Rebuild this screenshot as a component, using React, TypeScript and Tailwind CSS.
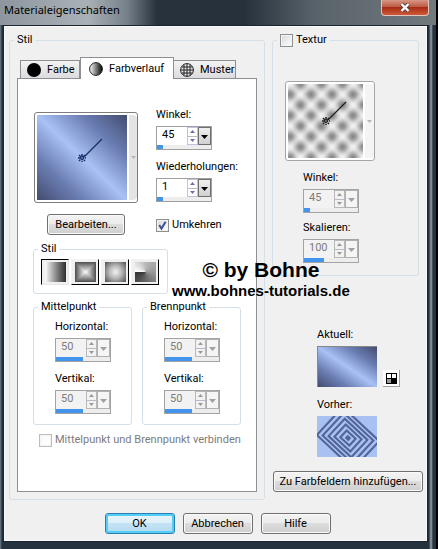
import { useId, useState } from 'react';
import type { ReactNode } from 'react';

interface SpinnerProps {
  label: string;
  initial: string;
  fill: string;
  disabled?: boolean;
}

function Spinner({ label, initial, fill, disabled = false }: SpinnerProps) {
  const id = useId();
  const [value, setValue] = useState(initial);

  const step = (delta: number) => setValue((v) => String(Number(v) + delta));
  const arrow = disabled ? 'text-[#999999]' : 'text-[#6f6cae]';

  return (
    <div className="flex flex-col gap-1">
      <label htmlFor={id} className="h-3.5 whitespace-nowrap">{label}</label>
      <div
        className={`flex h-6 w-14 flex-col border ${disabled ? 'border-[#a3a3a3] bg-[#f2f2f2] text-[#7c7c7c]' : 'border-[#a0a0a0] bg-white text-black'}`}
      >
        <div className="flex h-[18px]">
          <input
            id={id}
            value={value}
            disabled={disabled}
            onChange={(e) => setValue(e.target.value)}
            className="h-4 min-w-0 flex-1 bg-transparent pl-[5px] leading-4 outline-none"
          />
          <div className={`flex w-[11px] flex-col border ${disabled ? 'border-[#b8b8b8]' : 'border-[#c3c1dd]'} ${arrow}`}>
            <button type="button" aria-label="+" disabled={disabled} onClick={() => step(1)} className="flex flex-1 items-center justify-center border-b border-[#b8b8c8]">
              <svg width="5" height="3" viewBox="0 0 5 3"><path d="M2.5 0L5 3H0z" fill="currentColor" /></svg>
            </button>
            <button type="button" aria-label="-" disabled={disabled} onClick={() => step(-1)} className="flex flex-1 items-center justify-center">
              <svg width="5" height="3" viewBox="0 0 5 3"><path d="M0 0h5L2.5 3z" fill="currentColor" /></svg>
            </button>
          </div>
          <button
            type="button"
            aria-label={label}
            disabled={disabled}
            className={`flex w-[13px] items-center justify-center border pt-0.5 ${disabled ? 'border-[#b0b0b0] bg-[#f5f5f5] text-[#a0a0a0]' : 'border-[#707070] bg-linear-to-b from-[#f0f0f0] to-[#d0d0d0] text-black'}`}
          >
            <svg width="7" height="4" viewBox="0 0 7 4"><path d="M0 0h7L3.5 4z" fill="currentColor" /></svg>
          </button>
        </div>
        <div className="h-1 bg-[#ededed]">
          <div className={`h-full bg-[#4394ec] ${fill}`} />
        </div>
      </div>
    </div>
  );
}

interface GroupProps {
  title: ReactNode;
  className?: string;
  children: ReactNode;
}

function Group({ title, className = '', children }: GroupProps) {
  return (
    <fieldset className="min-w-0 rounded-[3px] border border-[#d5dfe5]">
      <legend className="ml-1 flex h-3.5 items-center px-[3px]">{title}</legend>
      <div className={className}>{children}</div>
    </fieldset>
  );
}

interface CheckProps {
  label: string;
  checked?: boolean;
  disabled?: boolean;
}

function Check({ label, checked = false, disabled = false }: CheckProps) {
  const [on, setOn] = useState(checked);
  return (
    <label className={`flex h-3.5 items-center gap-[3px] whitespace-nowrap ${disabled ? 'text-[#7c7c7c]' : ''}`}>
      <span className="relative flex">
        <input
          type="checkbox"
          checked={on}
          disabled={disabled}
          onChange={() => setOn(!on)}
          className="peer size-[13px] appearance-none border border-[#8e8f8f] bg-linear-to-br from-[#d5d9dc] to-white shadow-[inset_0_0_0_1px_#f4f4f4] disabled:border-[#bcbcbc] disabled:from-[#f8f8f8]"
        />
        <svg className="pointer-events-none absolute inset-0 hidden peer-checked:block" width="13" height="13" viewBox="0 0 13 13">
          <path d="M3.2 6l2.3 3.6L9.6 2.8" fill="none" stroke="#3f4f90" strokeWidth="2" />
        </svg>
      </span>
      {label}
    </label>
  );
}

function PushButton({ children, className = '' }: { children: ReactNode; className?: string }) {
  return (
    <button
      type="button"
      className={`h-[21px] rounded-[3px] border whitespace-nowrap ${className || 'border-[#707070] bg-[linear-gradient(#f3f3f3,#ebebeb_50%,#dddddd_50%,#cfcfcf)] shadow-[inset_0_0_0_1px_#fafafa]'}`}
    >
      {children}
    </button>
  );
}

function Handle({ color, className }: { color: string; className: string }) {
  return (
    <svg className={className} viewBox="0 0 32 32" width="32" height="32">
      <path d="M10 22L28 4" stroke={color} strokeWidth="1.2" />
      <path d="M8 19v8M4 23h8M5 20l6 6M11 20l-6 6" stroke={color} strokeWidth="1.5" strokeDasharray="2.4 1" />
      <circle cx="8" cy="23" r="2" fill={color} />
      <circle cx="8" cy="23" r="0.7" fill="#c8d2ea" />
    </svg>
  );
}

function TexturePattern() {
  return (
    <svg className="h-full w-full" aria-hidden="true">
      <defs>
        <radialGradient id="dot">
          <stop offset="0" stopColor="#828282" />
          <stop offset="0.3" stopColor="#8f8f8f" stopOpacity="0.85" />
          <stop offset="0.65" stopColor="#b0b0b0" stopOpacity="0.45" />
          <stop offset="1" stopColor="#e0e0e0" stopOpacity="0" />
        </radialGradient>
        <pattern id="dots" width="21" height="21" patternUnits="userSpaceOnUse" patternTransform="translate(2 0)">
          <rect width="21" height="21" fill="#f0f0f0" />
          {[[0, 10.5], [21, 10.5], [10.5, 0], [10.5, 21]].map(([x, y]) => (
            <circle key={`${x}-${y}`} cx={x} cy={y} r="10" fill="url(#dot)" />
          ))}
        </pattern>
      </defs>
      <rect width="100%" height="100%" fill="url(#dots)" />
    </svg>
  );
}

function PreviousSwatch() {
  return (
    <svg width="60" height="41" viewBox="0 0 60 41" className="block">
      <rect width="60" height="41" fill="#a9c0f2" />
      <g transform="translate(31 22) rotate(43)" fill="none" stroke="#53649a" strokeWidth="2.1">
        {[0.3, 1.3, 2.3, 3.3, 4.3, 5.3].map((n) => (
          <rect key={n} x={-4.7 * n} y={-3.6 * n} width={9.4 * n} height={7.2 * n} />
        ))}
      </g>
    </svg>
  );
}

const tab = 'flex items-center gap-1.5 whitespace-nowrap border border-b-0 border-[#8d8f95] px-1.5';
const blueRamp = 'bg-[linear-gradient(to_top_right,#434c70,#6a7db2_25%,#a9c1f6_50%,#6a7db2_75%,#434c70)]';

const styleButtons = [
  { name: 'Linear', fill: 'bg-linear-to-r from-white to-[#303030]' },
  { name: 'Rechteckig', fill: '' },
  { name: 'Kreisförmig', fill: 'bg-[radial-gradient(circle,#f2f2f2,#b5b5b5_45%,#4d4d4d)]' },
  { name: 'Strahlenförmig', fill: 'bg-[conic-gradient(from_270deg,#ffffff,#b8b8b8_25%,#999999_50%,#333333)]' },
];

function RectangularRamp() {
  return (
    <svg width="21" height="20" viewBox="0 0 21 20">
      {[0, 1, 2, 3, 4, 5, 6, 7, 8, 9].map((n) => (
        <rect key={n} x={n} y={n} width={21 - 2 * n} height={20 - 2 * n} fill={`rgb(${85 + n * 17},${85 + n * 17},${85 + n * 17})`} />
      ))}
    </svg>
  );
}

export default function App() {
  const [style, setStyle] = useState('Linear');

  return (
    <div className="relative min-h-screen overflow-hidden border-r-2 border-black bg-[#27323c] font-['Roboto',sans-serif] text-[11px] leading-[14px] text-black">
      <div className="bg-[linear-gradient(to_right,#708090,#26333e_2px,#26333e_calc(100%-7px),#9aa5ae_calc(100%-5px),#26333e_calc(100%-3px))] pr-2 pb-2 pl-[3px]">
        <header className="-mr-2 -ml-[3px] flex h-[25px] items-start justify-between bg-[linear-gradient(to_right,#8d969e,#aab1b6_20%,#77818a_29%,#27323d_36%,#26313c_56%,#586269_72%,#727a7e)] pr-[7px] pl-1">
          <h1 className="pt-0.5 font-['Noto_Sans'] leading-4">Materialeigenschaften</h1>
          <button
            type="button"
            aria-label="Schließen"
            className="flex h-4 w-12 items-center justify-center rounded-b border border-t-0 border-[#e1c6bf] bg-[linear-gradient(#d69887,#bd5b45_45%,#a92c15_50%,#cc5a39)]"
          >
            <svg width="12" height="11" viewBox="0 0 12 11">
              <path d="M2.5 2l7 7M9.5 2l-7 7" stroke="#5b4040" strokeWidth="4" />
              <path d="M2.5 2l7 7M9.5 2l-7 7" stroke="#ffffff" strokeWidth="2.4" />
            </svg>
          </button>
        </header>

        <main className="border border-[#1b242c] bg-[#f0f0f0] pt-[7px] pr-1 pb-[7px] pl-[5px] shadow-[inset_0_0_0_1px_#f8fafb]">
          <div className="grid grid-cols-[256fr_151fr] gap-[7px]">
            <Group title="Stil" className="px-[7px] pb-[7px]">
              <div className="flex h-[31px] items-end pt-2.5 pl-[3px]">
                <button type="button" className={`${tab} h-[18px] w-[60px] bg-linear-to-b from-[#f3f3f3] to-[#dcdcdf]`}>
                  <svg width="14" height="14" viewBox="0 0 14 14" className="shrink-0"><circle cx="7" cy="7" r="7" /></svg>
                  Farbe
                </button>
                <button type="button" className={`${tab} relative -mb-px h-[22px] w-[94px] bg-white px-2`}>
                  <svg width="14" height="14" viewBox="0 0 14 14" className="shrink-0">
                    <defs>
                      <linearGradient id="ball"><stop stopColor="#ffffff" /><stop offset="1" stopColor="#000000" /></linearGradient>
                    </defs>
                    <circle cx="7" cy="7" r="6.4" fill="url(#ball)" stroke="#222222" />
                  </svg>
                  Farbverlauf
                </button>
                <button type="button" className={`${tab} h-[18px] w-[62px] border-l-0 bg-linear-to-b from-[#f3f3f3] to-[#dcdcdf]`}>
                  <svg width="14" height="14" viewBox="0 0 14 14" className="shrink-0" fill="none" stroke="#222222">
                    <circle cx="7" cy="7" r="6.4" />
                    <path d="M4 1.5v11M7 .5v13M10 1.5v11M1.5 4h11M.5 7h13M1.5 10h11" />
                  </svg>
                  Muster
                </button>
              </div>

              <div className="border border-[#8d8f95] bg-white px-[15px] pt-[29px] pb-11">
                <div className="flex gap-[18px] pl-px">
                  <div className="flex flex-col items-center gap-[11px] pt-1">
                    <button type="button" aria-label="Farbverlauf" className="flex h-[91px] w-[104px] rounded-[3px] border border-[#7d7d7d] bg-white p-0.5 pr-0">
                      <span className={`relative block h-[85px] w-[90px] ${blueRamp}`}>
                        <Handle color="#172f69" className="absolute top-5 left-[37px]" />
                      </span>
                      <span className="ml-0.5 flex h-full flex-1 items-center justify-center rounded-r bg-[#e4e4e4]">
                        <svg width="5" height="3" viewBox="0 0 5 3"><path d="M0 0h5L2.5 3z" fill="#b5b5b5" /></svg>
                      </span>
                    </button>
                    <div className="grid w-[78px]"><PushButton>Bearbeiten...</PushButton></div>
                  </div>
                  <div className="flex flex-col gap-2.5">
                    <Spinner label="Winkel:" initial="45" fill="w-1.5" />
                    <Spinner label="Wiederholungen:" initial="1" fill="w-1.5" />
                    <div className="pt-1.5"><Check label="Umkehren" checked /></div>
                  </div>
                </div>

                <div className="mt-[7px] flex">
                  <Group title="Stil" className="pt-[3px] pr-2 pb-2 pl-[7px]">
                    <div className="flex gap-0.5">
                      {styleButtons.map(({ name, fill }) => (
                        <button
                          key={name}
                          type="button"
                          aria-label={name}
                          aria-pressed={style === name}
                          onClick={() => setStyle(name)}
                          className={`flex h-[26px] w-7 items-center justify-center border bg-[#f0f0f0] ${style === name ? 'border-t-black border-r-[#e8e8e8] border-b-[#e8e8e8] border-l-black' : 'border-t-[#f4f4f4] border-r-black border-b-black border-l-[#f4f4f4]'}`}
                        >
                          {fill ? <span className={`block h-5 w-[21px] ${fill}`} /> : <RectangularRamp />}
                        </button>
                      ))}
                    </div>
                  </Group>
                </div>

                <div className="mt-1.5 grid grid-cols-2 gap-2.5">
                  {['Mittelpunkt', 'Brennpunkt'].map((name) => (
                    <Group key={name} title={name} className="flex flex-col gap-2.5 pt-1.5 pb-2.5 pl-[21px]">
                      <Spinner label="Horizontal:" initial="50" fill="w-1/2" disabled />
                      <Spinner label="Vertikal:" initial="50" fill="w-1/2" disabled />
                    </Group>
                  ))}
                </div>

                <div className="mt-2 pl-1.5">
                  <Check label="Mittelpunkt und Brennpunkt verbinden" disabled />
                </div>
              </div>
            </Group>

            <div className="flex flex-col">
              <div className="pr-1">
                <Group title={<Check label="Textur" />} className="pt-[34px] pb-3 pl-3">
                  <button type="button" aria-label="Textur" className="flex h-20 w-[90px] rounded-[3px] border border-[#a5a5a5] bg-white p-0.5 pr-0">
                    <span className="relative block h-[74px] w-[75px]">
                      <TexturePattern />
                      <Handle color="#202020" className="absolute top-3.5 left-[30px]" />
                    </span>
                    <span className="ml-0.5 flex h-full flex-1 items-center justify-center bg-[#f4f4f4]">
                      <svg width="5" height="3" viewBox="0 0 5 3"><path d="M0 0h5L2.5 3z" fill="#b5b5b5" /></svg>
                    </span>
                  </button>
                  <div className="mt-2.5 flex flex-col gap-2 pl-[18px]">
                    <Spinner label="Winkel:" initial="45" fill="w-1.5" disabled />
                    <Spinner label="Skalieren:" initial="100" fill="w-5" disabled />
                  </div>
                </Group>
              </div>

              <div className="mt-[52px] flex flex-col gap-1 pl-[45px]">
                <span>Aktuell:</span>
                <div className="flex items-end gap-1.5">
                  <div className={`h-[41px] w-[60px] border-t border-l border-[#888888] ${blueRamp}`} />
                  <button type="button" aria-label="Tauschen" className="flex size-[17px] items-center justify-center border-r border-b border-[#a0a0a0] bg-white">
                    <svg width="11" height="11" viewBox="0 0 11 11">
                      <rect width="11" height="11" />
                      <path d="M1 1h4v4H1zM6 1h4v4H6z" fill="#ffffff" />
                      <path d="M1 6h4v4H1z" fill="#999999" />
                    </svg>
                  </button>
                </div>
                <span className="mt-[7px]">Vorher:</span>
                <PreviousSwatch />
              </div>
              <div className="mt-3.5 grid pl-px"><PushButton>Zu Farbfeldern hinzufügen...</PushButton></div>
            </div>
          </div>

          <footer className="mt-[13px] flex justify-center gap-2 pl-[3px]">
            <div className="grid w-[70px]">
              <PushButton className="border-[#2c7fb0] bg-[linear-gradient(#eaf5fb,#dceef8_50%,#c4e2f4_50%,#b5daf0)] shadow-[inset_0_0_0_2px_#52cdf5]">OK</PushButton>
            </div>
            <div className="grid w-[70px]"><PushButton>Abbrechen</PushButton></div>
            <div className="grid w-[70px]"><PushButton>Hilfe</PushButton></div>
          </footer>
        </main>
      </div>

      <div className="pointer-events-none absolute top-[258px] left-[172px] flex flex-col items-center font-['Liberation_Sans'] font-bold">
        <span className="text-[21px] leading-6">© by Bohne</span>
        <span className="text-[15px] leading-[18px]">www.bohnes-tutorials.de</span>
      </div>
    </div>
  );
}
